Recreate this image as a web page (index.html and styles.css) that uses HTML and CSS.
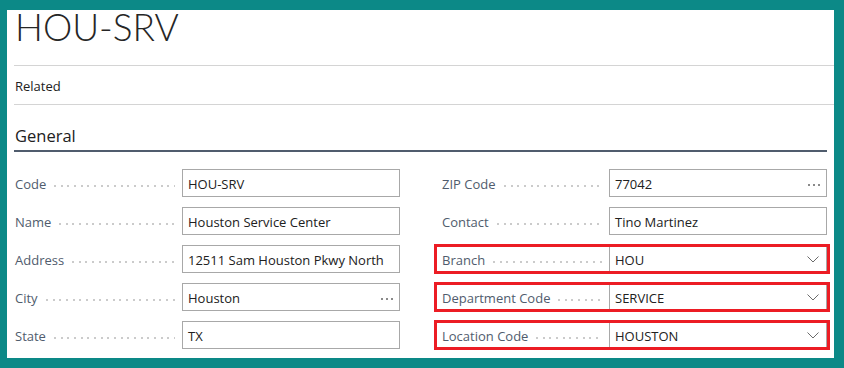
FILE: index.html
```html
<!DOCTYPE html>
<html lang="en">
<head>
<meta charset="utf-8">
<title>HOU-SRV</title>
<link rel="stylesheet" href="styles.css">
</head>
<body>
<div class="panel">
  <header class="title-bar"><h1 class="title">HOU-SRV</h1></header>
  <nav class="action-bar"><span class="action">Related</span></nav>
  <section class="group">
    <h2 class="group-title">General</h2>
    <div class="fields">
      <div class="col">
        <div class="field">
          <div class="label"><span class="label-text">Code</span><span class="leader"></span></div>
          <div class="input">HOU-SRV</div>
        </div>
        <div class="field">
          <div class="label"><span class="label-text">Name</span><span class="leader"></span></div>
          <div class="input">Houston Service Center</div>
        </div>
        <div class="field">
          <div class="label"><span class="label-text">Address</span><span class="leader"></span></div>
          <div class="input">12511 Sam Houston Pkwy North</div>
        </div>
        <div class="field">
          <div class="label"><span class="label-text">City</span><span class="leader"></span></div>
          <div class="input"><span class="value">Houston</span><span class="ellipsis"><i></i><i></i><i></i></span></div>
        </div>
        <div class="field">
          <div class="label"><span class="label-text">State</span><span class="leader"></span></div>
          <div class="input">TX</div>
        </div>
      </div>
      <div class="col">
        <div class="field">
          <div class="label"><span class="label-text">ZIP Code</span><span class="leader"></span></div>
          <div class="input"><span class="value">77042</span><span class="ellipsis"><i></i><i></i><i></i></span></div>
        </div>
        <div class="field">
          <div class="label"><span class="label-text">Contact</span><span class="leader"></span></div>
          <div class="input">Tino Martinez</div>
        </div>
        <div class="field highlight">
          <div class="label"><span class="label-text">Branch</span><span class="leader"></span></div>
          <div class="input"><span class="value">HOU</span><svg class="chevron" width="12" height="7" viewBox="0 0 12 7"><polyline points="0.5,0.5 6,6 11.5,0.5" fill="none" stroke="#6b6b6b" stroke-width="1"/></svg></div>
        </div>
        <div class="field highlight">
          <div class="label"><span class="label-text">Department Code</span><span class="leader"></span></div>
          <div class="input"><span class="value">SERVICE</span><svg class="chevron" width="12" height="7" viewBox="0 0 12 7"><polyline points="0.5,0.5 6,6 11.5,0.5" fill="none" stroke="#6b6b6b" stroke-width="1"/></svg></div>
        </div>
        <div class="field highlight">
          <div class="label"><span class="label-text">Location Code</span><span class="leader"></span></div>
          <div class="input"><span class="value">HOUSTON</span><svg class="chevron" width="12" height="7" viewBox="0 0 12 7"><polyline points="0.5,0.5 6,6 11.5,0.5" fill="none" stroke="#6b6b6b" stroke-width="1"/></svg></div>
        </div>
      </div>
    </div>
  </section>
</div>
</body>
</html>
```

FILE: styles.css
```css
* { box-sizing: border-box; }
html, body { margin: 0; padding: 0; }
body {
  background: #0c8987;
  font-family: "Open Sans", "Liberation Sans", sans-serif;
  font-size: 13px;
  color: #212121;
  padding: 10px 10px 10px 7px;
}
.panel {
  height: 348px;
  background: #fff;
  padding-left: 7px;
}
.title-bar {
  height: 56px;
  border-bottom: 1px solid #d4d4d4;
}
.title {
  margin: 0;
  font-family: "Lato", "Open Sans", sans-serif;
  font-weight: 300;
  font-size: 37px;
  line-height: 33px;
  padding-left: 1px;
  color: #262626;
}
.action-bar {
  height: 39px;
  border-bottom: 1px solid #d4d4d4;
  display: flex;
  align-items: center;
  padding: 2px 0 0 1px;
}
.action { font-size: 13px; color: #212121; }
.group { margin-right: 7px; }
.group-title {
  margin: 0;
  padding: 19px 0 2px 1px;
  font-size: 16.5px;
  line-height: 24px;
  font-weight: 500;
  color: #212121;
  border-bottom: 2px solid #505c6d;
}
.fields {
  display: grid;
  grid-template-columns: 1fr 1fr;
  column-gap: 41px;
  margin-top: 17px;
}
.col { display: flex; flex-direction: column; gap: 10px; }
.field {
  display: flex;
  align-items: center;
  height: 28px;
  position: relative;
}
.label {
  width: 168px;
  height: 28px;
  display: flex;
  align-items: center;
  padding: 2px 0 0 1px;
  color: #505c6d;
}
.leader {
  flex: 1;
  height: 2px;
  margin: 3px 7px 0 8px;
  background-image: repeating-linear-gradient(to right, #cbcbcb 0 2px, transparent 2px 6.67px);
}
.input {
  width: 218px;
  height: 28px;
  border: 1px solid #a8a8a8;
  padding: 2px 6px 0 5px;
  display: flex;
  align-items: center;
  white-space: nowrap;
  color: #212121;
}
.value { flex: 1; }
.ellipsis { display: flex; gap: 3px; margin-top: 1px; }
.ellipsis i { width: 2px; height: 2px; background: #8a8a8a; display: block; }
.chevron { margin: -2px 1px 0 0; }
.highlight::after {
  content: "";
  position: absolute;
  left: -7px;
  right: -3px;
  top: -1px;
  bottom: -1px;
  border: 3px solid #ec1c24;
  pointer-events: none;
}
```
